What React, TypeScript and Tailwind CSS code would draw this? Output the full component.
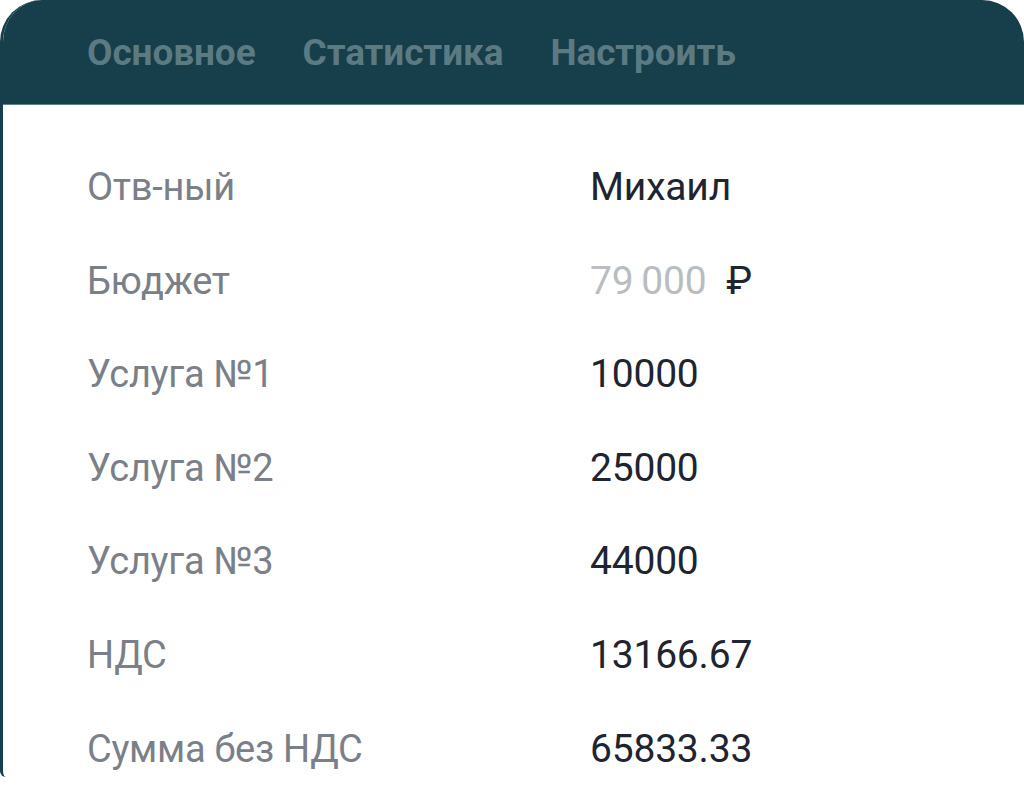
import React from "react";

const rows: { label: string; value: React.ReactNode }[] = [
  { label: "Отв-ный", value: "Михаил" },
  {
    label: "Бюджет",
    value: (
      <span>
        <span className="text-[#b9bdc1]">79&#8201;000</span>
        <span className="ml-[20px] text-[#1e2530]">₽</span>
      </span>
    ),
  },
  { label: "Услуга №1", value: "10000" },
  { label: "Услуга №2", value: "25000" },
  { label: "Услуга №3", value: "44000" },
  { label: "НДС", value: "13166.67" },
  { label: "Сумма без НДС", value: "65833.33" },
];

const tabs = ["Основное", "Статистика", "Настроить"];

export default function App() {
  return (
    <div
      className="h-[802px] w-[1024px] overflow-hidden bg-white"
      style={{ fontFamily: "Roboto, 'Noto Sans', sans-serif" }}
    >
      {/* Card */}
      <div className="h-[777px] w-[1024px] overflow-hidden rounded-t-[42px] rounded-bl-[6px] border-l-[3px] border-[#163e4b] bg-white">
        {/* Tabs header */}
        <div className="flex h-[105px] items-center gap-[47px] border-b border-[#62808a] bg-[#163e4b] pl-[84px]">
          {tabs.map((t) => (
            <span
              key={t}
              className="text-[37px] font-bold leading-none tracking-[-0.1px] text-[#5b7a82]"
            >
              {t}
            </span>
          ))}
        </div>

        {/* Details */}
        <div className="pt-[36px] pl-[84px]">
          {rows.map((r) => (
            <div
              key={r.label}
              className="grid h-[93.6px] grid-cols-[503px_1fr] items-center leading-[93.6px]"
            >
              <span className="text-[38px] tracking-[-0.3px] text-[#7b8088]">
                {r.label}
              </span>
              <span className="text-[39px] tracking-[-0.2px] text-[#1e2530]">
                {r.value}
              </span>
            </div>
          ))}
        </div>
      </div>
    </div>
  );
}
